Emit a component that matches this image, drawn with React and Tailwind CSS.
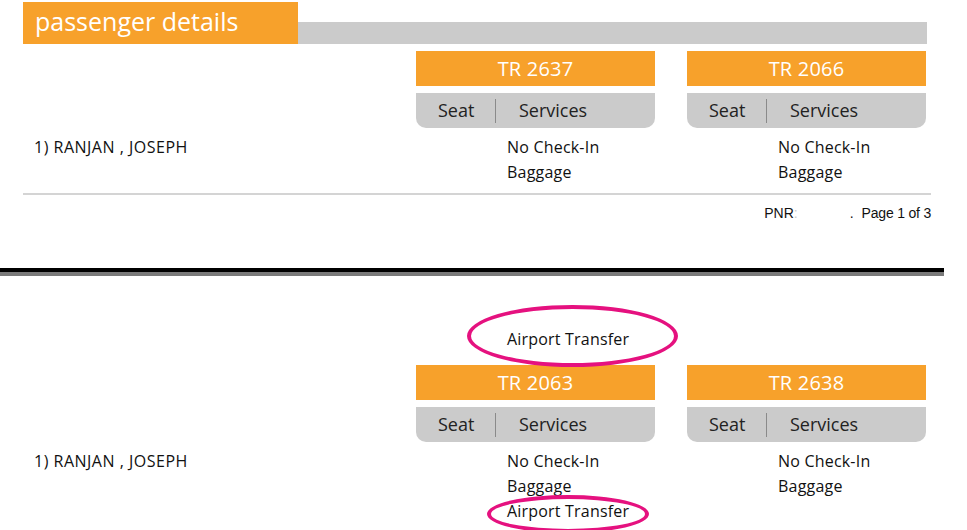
import React from "react";

const F = { fontFamily: '"Open Sans", "Noto Sans", sans-serif' };

function Flight({ code }) {
  return (
    <div className="w-[239px] flex flex-col">
      <div className="h-[35px] bg-[#f7a12b] flex items-center justify-center text-white text-[20px] tracking-[0.2px]">
        {code}
      </div>
      <div className="mt-[7px] h-[35px] bg-[#cbcbcb] rounded-b-[10px] flex items-center text-[#222] text-[18px]">
        <span className="pl-[22px] w-[79px]">Seat</span>
        <span className="w-px h-[24px] bg-[#8a8a8a]"></span>
        <span className="pl-[23px]">Services</span>
      </div>
    </div>
  );
}

function Services({ extra }) {
  return (
    <div className="w-[239px] pl-[91px] text-[16px] tracking-[0.2px] leading-[25px] text-[#111]">
      <div>No Check-In</div>
      <div>Baggage</div>
      {extra && (
        <div className="relative">
          Airport Transfer
          <div className="absolute left-[-20px] top-[-4px] w-[162px] h-[38px] rounded-[50%] border-[4px] border-[#e5117f]"></div>
        </div>
      )}
    </div>
  );
}

function Name() {
  return (
    <div className="w-[393px] pl-[11px] text-[16px] tracking-[0.5px] leading-[25px] text-[#111]">
      1) RANJAN , JOSEPH
    </div>
  );
}

export default function App() {
  return (
    <div className="w-[967px] h-[530px] bg-white overflow-hidden relative" style={F}>
      <div className="pl-[23px] pt-[2px]">
        <div className="flex w-[904px]">
          <div className="w-[275px] h-[42px] bg-[#f7a12b] text-white text-[25px] pl-[12px] leading-[38px]">
            passenger details
          </div>
          <div className="flex-1 h-[22px] self-end bg-[#cbcbcb]"></div>
        </div>
        <div className="flex mt-[7px] pl-[393px] gap-[32px]">
          <Flight code="TR 2637" />
          <Flight code="TR 2066" />
        </div>
        <div className="flex mt-[7px]">
          <Name />
          <div className="flex gap-[32px]">
            <Services />
            <Services />
          </div>
        </div>
        <div className="mt-[8px] w-[908px] h-[2px] bg-[#d4d4d4]"></div>
        <div
          className="w-[908px] flex justify-end mt-[8px] text-[14px] text-[#111]"
          style={{ fontFamily: '"Liberation Sans", Arial, sans-serif' }}
        >
          <span>PNR</span>
          <span className="text-[#ccc]">:</span>
          <span className="w-[52px]"></span>
          <span>.</span>
          <span className="w-[8px]"></span>
          <span className="tracking-[-0.2px]">Page 1 of 3</span>
        </div>
      </div>
      <div className="mt-[44px] w-[944px] h-[4px] bg-black"></div>
      <div className="w-[944px] h-[4px] bg-[#7a7a7a]"></div>
      <div className="pl-[23px]">
        <div className="flex mt-[51px] pl-[393px]">
          <div className="relative w-[239px] pl-[91px] text-[16px] tracking-[0.2px] leading-[25px] text-[#111]">
            Airport Transfer
            <div className="absolute left-[51px] top-[-22px] w-[211px] h-[62px] rounded-[50%] border-[4px] border-[#e5117f]"></div>
          </div>
        </div>
        <div className="flex mt-[13px] pl-[393px] gap-[32px]">
          <Flight code="TR 2063" />
          <Flight code="TR 2638" />
        </div>
        <div className="flex mt-[7px]">
          <Name />
          <div className="flex gap-[32px]">
            <Services extra />
            <Services />
          </div>
        </div>
      </div>
    </div>
  );
}
